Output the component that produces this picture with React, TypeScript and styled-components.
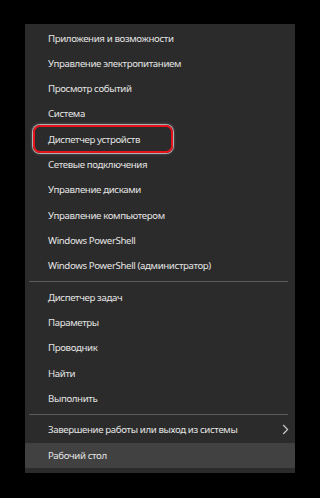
import React from "react";
import styled, { createGlobalStyle } from "styled-components";

const Global = createGlobalStyle`
  html, body { margin: 0; padding: 0; background: #000; }
  body { font-family: "Noto Sans", "Open Sans", sans-serif; }
`;

const Page = styled.div`
  width: 320px;
  height: 498px;
  background: #000;
  padding: 24px 0 0 25px;
  box-sizing: border-box;
`;

const Menu = styled.div`
  width: 270px;
  background: #2b2b2b;
  padding: 1.4px 0 4.7px 0;
  display: flex;
  flex-direction: column;
`;

const Row = styled.div<{ $active?: boolean }>`
  position: relative;
  height: 25.3px;
  display: flex;
  align-items: center;
  padding-left: 23px;
  padding-right: 6px;
  background: ${(p) => (p.$active ? "#414141" : "transparent")};
  color: #e4e4e4;
  font-size: 9.7px;
  letter-spacing: -0.38px;
  white-space: nowrap;
`;

const Label = styled.span`
  flex: 1;
`;

const Separator = styled.div`
  height: 6.2px;
  display: flex;
  align-items: center;
  padding: 0 7px 0 4px;
  &::after {
    content: "";
    flex: 1;
    height: 1px;
    background: #5c5c5c;
  }
`;

const Highlight = styled.div`
  position: absolute;
  left: 8px;
  top: -1.5px;
  width: 140px;
  height: 28px;
  box-sizing: border-box;
  border: 2px solid #e5131b;
  border-radius: 7px;
  box-shadow: 0 0 0 1px rgba(255, 255, 255, 0.55), 0 0 3px 1px rgba(255, 255, 255, 0.25);
  pointer-events: none;
`;

const Chevron = () => (
  <svg width="7" height="11" viewBox="0 0 7 11" style={{ display: "block" }}>
    <path d="M1.2 1 L5.6 5.5 L1.2 10" fill="none" stroke="#c8c8c8" strokeWidth="1.2" />
  </svg>
);

const groups: string[][] = [
  [
    "Приложения и возможности",
    "Управление электропитанием",
    "Просмотр событий",
    "Система",
    "Диспетчер устройств",
    "Сетевые подключения",
    "Управление дисками",
    "Управление компьютером",
    "Windows PowerShell",
    "Windows PowerShell (администратор)",
  ],
  ["Диспетчер задач", "Параметры", "Проводник", "Найти", "Выполнить"],
  ["Завершение работы или выход из системы", "Рабочий стол"],
];

export default function App() {
  return (
    <>
      <Global />
      <Page>
        <Menu>
          {groups.map((g, gi) => (
            <React.Fragment key={gi}>
              {gi > 0 && <Separator />}
              {g.map((item) => (
                <Row key={item} $active={item === "Рабочий стол"}>
                  <Label>{item}</Label>
                  {item === "Диспетчер устройств" && <Highlight />}
                  {item.startsWith("Завершение") && <Chevron />}
                </Row>
              ))}
            </React.Fragment>
          ))}
        </Menu>
      </Page>
    </>
  );
}
